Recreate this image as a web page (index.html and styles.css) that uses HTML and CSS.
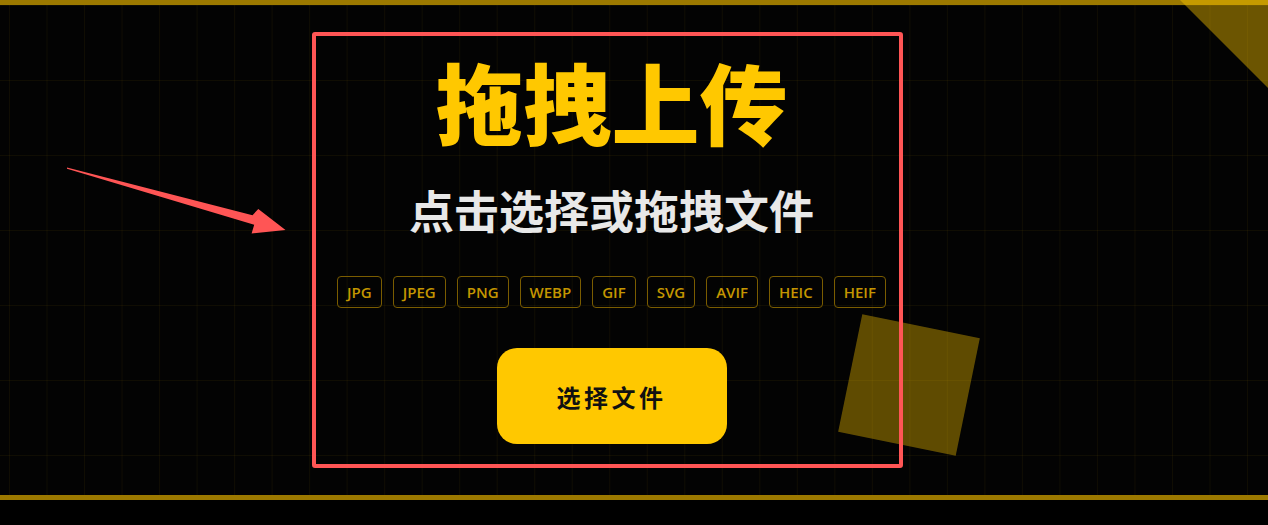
FILE: index.html
```html
<!DOCTYPE html>
<html>
<head>
  <meta charset="UTF-8">
  <link rel="stylesheet" href="styles.css">
</head>
<body>
  <div class="top-bar"></div>
  <div class="stage">
    <div class="corner"></div>
    <div class="tilt-square"></div>
    <svg class="pointer" width="240" height="80" viewBox="60 160 240 80">
      <polygon points="67,167.6 252.5,215.2 258.3,209 285.5,230 251.6,233.4 254.2,224.8 67,168.8" fill="#ff5555"/>
    </svg>

    <div class="drop-zone">
      <h1 class="drop-title">拖拽上传</h1>
      <p class="drop-sub">点击选择或拖拽文件</p>
      <div class="formats">
        <span class="format">JPG</span>
        <span class="format">JPEG</span>
        <span class="format">PNG</span>
        <span class="format">WEBP</span>
        <span class="format">GIF</span>
        <span class="format">SVG</span>
        <span class="format">AVIF</span>
        <span class="format">HEIC</span>
        <span class="format">HEIF</span>
      </div>
      <button class="pick-btn">选择文件</button>
    </div>
  </div>
  <div class="bottom-bar"></div>
</body>
</html>
```

FILE: styles.css
```css
body {
  margin: 0;
  background: #000;
  font-family: "Noto Sans CJK SC", "Noto Sans", sans-serif;
  overflow: hidden;
}
.top-bar, .bottom-bar {
  height: 5px;
  background: #9c7900;
}
.stage {
  position: relative;
  height: 490px;
  box-sizing: border-box;
  padding: 27px 0 0 312px;
  background-color: #030303;
  background-image:
    linear-gradient(to right, rgba(255,200,0,0.05) 1px, transparent 1px),
    linear-gradient(to bottom, rgba(255,200,0,0.05) 1px, transparent 1px);
  background-size: 37.53px 75px;
  background-position: 9px 0;
}
.corner {
  position: absolute;
  top: -5px;
  right: 0;
  width: 88px;
  height: 88px;
  background: rgba(255,200,0,0.42);
  clip-path: polygon(0 0, 100% 0, 100% 100%);
}
.tilt-square {
  position: absolute;
  left: 849px;
  top: 320px;
  width: 120px;
  height: 120px;
  background: rgba(255,200,0,0.37);
  transform: rotate(11.6deg);
}
.pointer {
  position: absolute;
  left: 60px;
  top: 155px;
}
.drop-zone {
  position: relative;
  z-index: 1;
  width: 591px;
  height: 436px;
  box-sizing: border-box;
  border: 4px solid #ff5555;
  border-radius: 3px;
  padding-left: 8px;
  display: flex;
  flex-direction: column;
  align-items: center;
}
.drop-title {
  margin: 20px 0 0 0;
  font-size: 88px;
  line-height: 1;
  font-weight: 900;
  color: #ffc800;
}
.drop-sub {
  margin: 43px 0 0 0;
  font-size: 45px;
  line-height: 1;
  font-weight: 700;
  color: #e8e8e8;
}
.formats {
  margin-top: 44px;
  display: flex;
  gap: 11px;
}
.format {
  padding: 5px 9px;
  border: 1px solid #7a5c00;
  border-radius: 4px;
  font-family: "Open Sans", "Noto Sans", sans-serif;
  font-size: 15px;
  font-weight: 600;
  line-height: 20px;
  color: #c49600;
}
.pick-btn {
  margin-top: 40px;
  width: 230px;
  height: 96px;
  border: none;
  border-radius: 20px;
  background: #ffc800;
  color: #111;
  font-family: "Noto Sans CJK SC", sans-serif;
  font-size: 24px;
  font-weight: 700;
  letter-spacing: 3.5px;
  cursor: pointer;
}
```
